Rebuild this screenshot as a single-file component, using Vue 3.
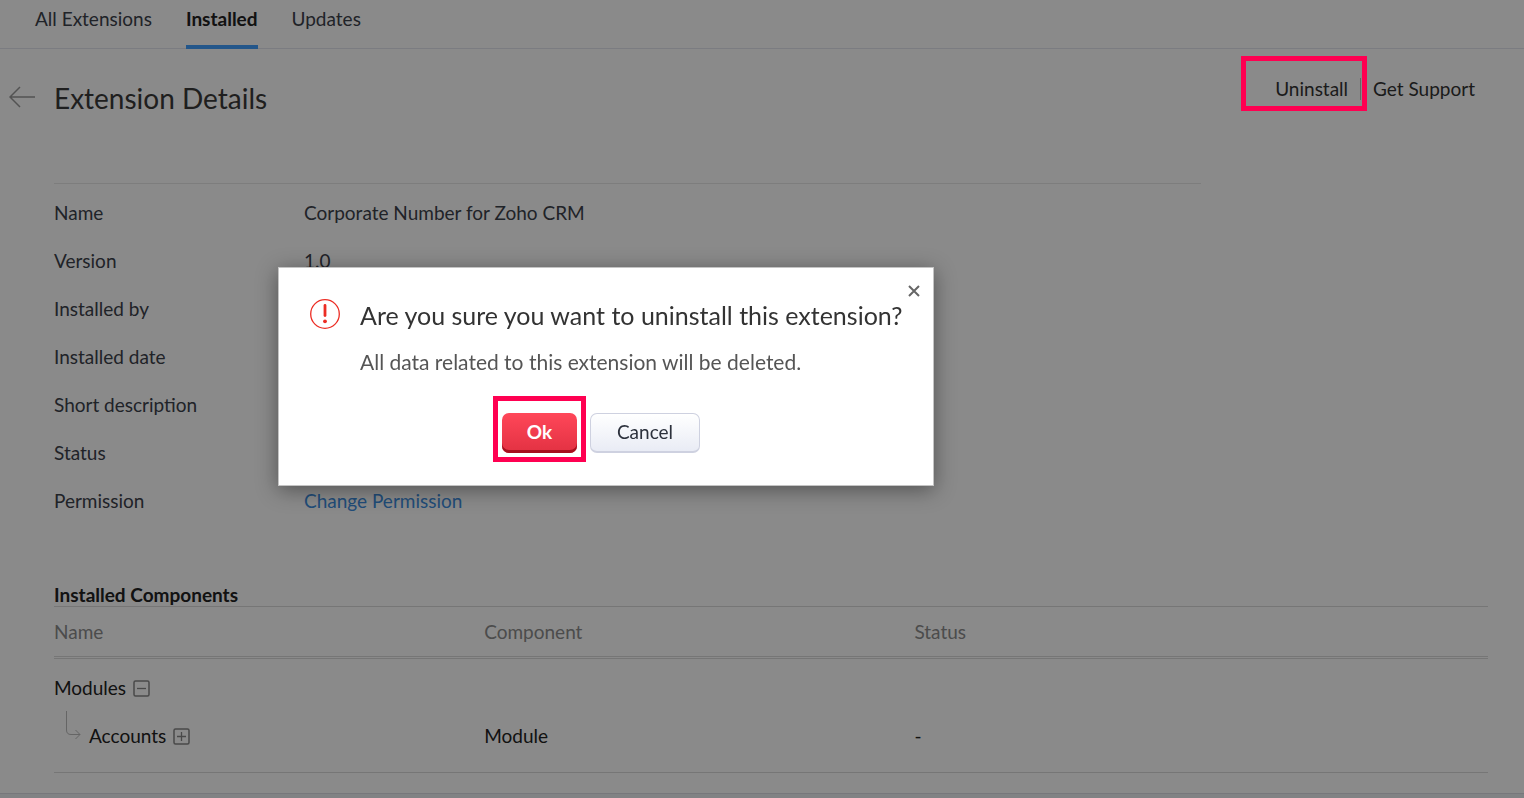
<template>
  <div class="page">
    <main class="panel">
      <!-- Tabs -->
      <nav class="tabs">
        <a
          v-for="tab in tabs"
          :key="tab"
          href="#"
          class="tab"
          :class="{ active: tab === activeTab }"
          @click.prevent="activeTab = tab"
        >{{ tab }}</a>
      </nav>

      <!-- Page header -->
      <header class="page-header">
        <a href="#" class="back" aria-label="Back">
          <svg width="26" height="22" viewBox="0 0 26 22" fill="none" stroke="currentColor" stroke-width="1.5">
            <path d="M26 11H1M11 1L1 11l10 10"></path>
          </svg>
        </a>
        <h1>Extension Details</h1>
        <div class="actions">
          <a href="#" class="action uninstall">Uninstall<span class="highlight"></span></a>
          <a href="#" class="action">Get Support</a>
        </div>
      </header>

      <div class="content">
        <dl class="details">
          <div v-for="item in details" :key="item.label" class="detail-row">
            <dt>{{ item.label }}</dt>
            <dd>
              <a v-if="item.link" href="#">{{ item.value }}</a>
              <template v-else>{{ item.value }}</template>
            </dd>
          </div>
        </dl>

        <h2>Installed Components</h2>
        <table class="components">
          <thead>
            <tr>
              <th>Name</th>
              <th>Component</th>
              <th>Status</th>
            </tr>
          </thead>
          <tbody>
            <tr>
              <td colspan="3">
                <div class="cell">
                  Modules
                  <button class="toggle" aria-label="Collapse Modules">
                    <svg width="17" height="17" viewBox="0 0 17 17" fill="none" stroke="currentColor">
                      <rect x="1" y="1" width="15" height="15" rx="1.5" stroke-width="1.5"></rect>
                      <path d="M4 8.5h9" stroke-width="1.3"></path>
                    </svg>
                  </button>
                </div>
              </td>
            </tr>
            <tr>
              <td>
                <div class="cell child">
                  <svg class="branch" width="16" height="30" viewBox="0 0 16 30" fill="none" stroke="currentColor">
                    <path d="M1.5 0v19q0 4.5 4.5 4.5h9M10.5 19l4.5 4.500-4.500 4.500"></path>
                  </svg>
                  Accounts
                  <button class="toggle" aria-label="Expand Accounts">
                    <svg width="17" height="17" viewBox="0 0 17 17" fill="none" stroke="currentColor">
                      <rect x="1" y="1" width="15" height="15" rx="1.5" stroke-width="1.5"></rect>
                      <path d="M4 8.5h9M8.5 4v9" stroke-width="1.3"></path>
                    </svg>
                  </button>
                </div>
              </td>
              <td>Module</td>
              <td>-</td>
            </tr>
          </tbody>
        </table>
      </div>
    </main>

    <div class="overlay"></div>

    <!-- Confirmation dialog -->
    <div class="dialog" role="alertdialog" aria-labelledby="dialog-title" aria-describedby="dialog-text">
      <button class="close" aria-label="Close">
        <svg width="12" height="12" viewBox="0 0 12 12" fill="none" stroke="currentColor" stroke-width="2">
          <path d="M1 1l10 10M11 1L1 11"></path>
        </svg>
      </button>
      <div class="dialog-body">
        <svg class="alert" width="30" height="30" viewBox="0 0 30 30" fill="none" stroke="currentColor">
          <circle cx="15" cy="15" r="14.3" stroke-width="1.3"></circle>
          <path d="M15 6.5v10" stroke-width="2.8" stroke-linecap="round"></path>
          <circle cx="15" cy="22.3" r="1.9" fill="currentColor" stroke="none"></circle>
        </svg>
        <div>
          <h3 id="dialog-title">Are you sure you want to uninstall this extension?</h3>
          <p id="dialog-text">All data related to this extension will be deleted.</p>
        </div>
      </div>
      <div class="dialog-buttons">
        <button class="btn btn-danger">Ok<span class="highlight"></span></button>
        <button class="btn">Cancel</button>
      </div>
    </div>
  </div>
</template>

<script setup>
import { ref } from 'vue'

const tabs = ['All Extensions', 'Installed', 'Updates']
const activeTab = ref('Installed')

const details = [
  { label: 'Name', value: 'Corporate Number for Zoho CRM' },
  { label: 'Version', value: '1.0' },
  { label: 'Installed by', value: '' },
  { label: 'Installed date', value: '' },
  { label: 'Short description', value: '' },
  { label: 'Status', value: '' },
  { label: 'Permission', value: 'Change Permission', link: true }
]
</script>

<style>
body {
  background: #eff0f4;
}
</style>

<style scoped>
.page {
  font-family: Lato, "Liberation Sans", sans-serif;
  font-size: 19px;
  line-height: 24px;
  color: #3c414b;
}

.panel {
  background: #fff;
  border-bottom: 1px solid #dcdde4;
}

a {
  color: inherit;
  text-decoration: none;
}

button {
  font: inherit;
  cursor: pointer;
}

/* Tabs */
.tabs {
  display: flex;
  gap: 34px;
  height: 48px;
  padding-left: 35px;
  border-bottom: 1px solid #e4e5ee;
}

.tab {
  height: 38px;
  padding-top: 7px;
}

.tab.active {
  color: #222;
  font-weight: 700;
  border-bottom: 4px solid #419fff;
  border-radius: 3px 3px 0 0;
}

/* Header */
.page-header {
  display: flex;
  align-items: flex-start;
  height: 104px;
  margin-bottom: 30px;
  padding: 29px 49px 0 9px;
  box-sizing: border-box;
}

.back {
  width: 45px;
  padding-top: 8px;
  color: #999;
}

.back svg {
  display: block;
}

h1 {
  margin: 0;
  font-size: 28px;
  line-height: 40px;
  font-weight: 400;
  color: #3a3a3a;
}

.actions {
  display: flex;
  margin-left: auto;
}

.action {
  position: relative;
  line-height: 22px;
  color: #333;
}

.action + .action {
  margin-left: 12px;
  padding-left: 12px;
  border-left: 1px solid #bbb;
}

.highlight {
  position: absolute;
  z-index: 20;
  box-sizing: border-box;
  border: 5px solid #ff0051;
  pointer-events: none;
}

.uninstall .highlight {
  inset: -22px -19px -11px -34px;
}

/* Details */
.content {
  padding: 0 36px 20px 54px;
}

.details {
  width: 80%;
  margin: 0 0 58px;
  padding-top: 5px;
  border-top: 1px solid #e8e8e8;
}

.detail-row {
  display: flex;
  line-height: 48px;
  min-height: 48px;
}

dt {
  width: 250px;
}

dd {
  margin: 0;
}

dd a {
  color: #3d8ee0;
}

/* Components */
h2 {
  margin: 0;
  font-size: 19px;
  line-height: 23px;
  font-weight: 700;
  color: #222;
}

.components {
  width: 100%;
  table-layout: fixed;
  border-collapse: separate;
  border-spacing: 0;
  border-top: 1px solid #dadada;
  border-bottom: 1px solid #dadada;
  color: #222;
}

th,
td {
  padding: 0;
  text-align: left;
}

th {
  width: 30%;
  height: 49px;
  font-weight: 400;
  color: #8c8c8c;
  border-bottom: 3px double #dadada;
}

th:last-child {
  width: 40%;
}

td {
  height: 48px;
}

tbody tr:first-child td {
  padding-top: 5px;
}

tbody tr:last-child td {
  padding-bottom: 12px;
}

.cell {
  display: flex;
  align-items: center;
  gap: 7px;
}

.child {
  position: relative;
  padding-left: 35px;
}

.branch {
  position: absolute;
  left: 11px;
  top: -13px;
  color: #bbb;
}

.toggle {
  padding: 0;
  border: 0;
  background: none;
  color: #888;
}

.toggle svg {
  display: block;
}

/* Dialog */
.overlay {
  position: fixed;
  inset: 0;
  z-index: 10;
  background: rgba(0, 0, 0, 0.46);
}

.dialog {
  position: absolute;
  top: 267px;
  left: 278px;
  z-index: 15;
  box-sizing: border-box;
  width: 656px;
  padding: 31px 31px 32px;
  background: #fff;
  border: 1px solid #c4c4c4;
  box-shadow: 0 4px 20px rgba(0, 0, 0, 0.4);
}

.close {
  position: absolute;
  top: 17px;
  right: 13px;
  padding: 0;
  border: 0;
  background: none;
  color: #666;
}

.close svg {
  display: block;
}

.dialog-body {
  display: flex;
  gap: 20px;
}

.alert {
  flex-shrink: 0;
  color: #ec2d24;
}

h3 {
  margin: 0;
  font-size: 25px;
  line-height: 32px;
  font-weight: 400;
  color: #333;
  white-space: nowrap;
}

.dialog-body p {
  margin: 17px 0 0;
  font-size: 21px;
  line-height: 28px;
  color: #555;
}

.dialog-buttons {
  display: flex;
  gap: 13px;
  margin: 37px 0 0 192px;
}

.btn {
  position: relative;
  box-sizing: border-box;
  width: 110px;
  height: 40px;
  padding: 0 0 2px;
  color: #2c313c;
  border: 1px solid #ced1e0;
  border-bottom-width: 2px;
  border-radius: 7px;
  background: linear-gradient(#fff, #e9ecf5);
}

.btn-danger {
  width: 75px;
  color: #fff;
  font-weight: 700;
  border: 0;
  background: linear-gradient(#ff4759, #e23142);
  box-shadow: inset 0 -3px 0 #a60f1e;
}

.btn-danger .highlight {
  inset: -17px -9px -9px;
}
</style>
